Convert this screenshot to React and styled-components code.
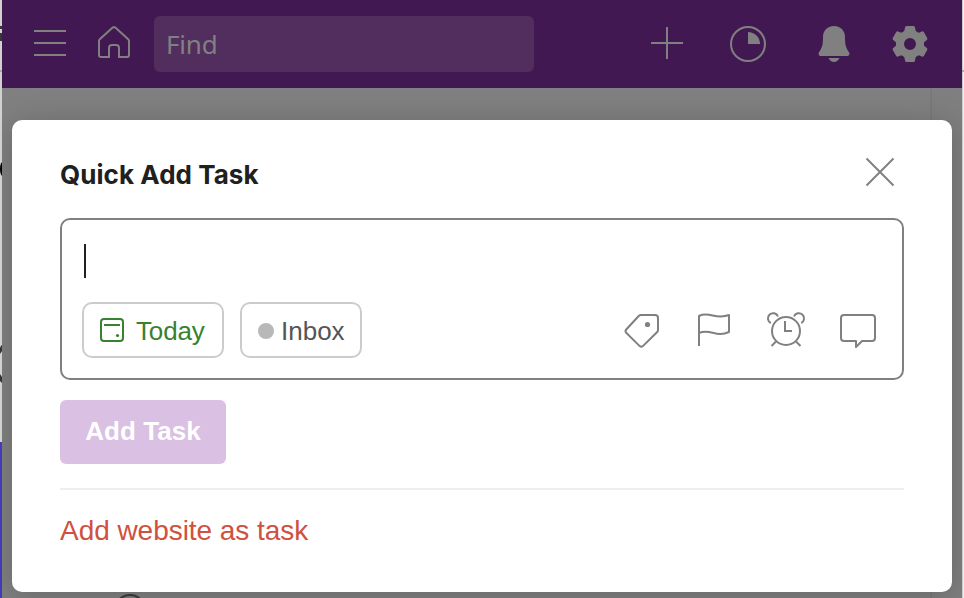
import React from "react";
import styled, { createGlobalStyle } from "styled-components";

const GlobalStyle = createGlobalStyle`
  * { box-sizing: border-box; }
  body { margin: 0; overflow: hidden; font-family: "Liberation Sans", Arial, sans-serif; }
  button { font: inherit; margin: 0; }
`;

const Screen = styled.div`
  display: grid;
  grid-template-columns: 2px 960px 2px;
  width: 964px;
  height: 598px;
  overflow: hidden;
  background: #d0d2d0;
`;

const Edge = styled.svg`
  display: block;
  width: 2px;
  height: 598px;
`;

const Popup = styled.div`
  position: relative;
  height: 598px;
  overflow: hidden;
  background: #808080;
`;

const Header = styled.header`
  display: flex;
  align-items: center;
  height: 88px;
  padding: 0 32px;
  background: #421852;
  color: #808080;
`;

const HeaderButton = styled.button`
  display: flex;
  flex: none;
  width: ${(p) => p.$width}px;
  height: 40px;
  margin-left: ${(p) => p.$gap || 0}px;
  padding: 0;
  border: 0;
  background: none;
  color: inherit;
`;

const Find = styled.div`
  display: flex;
  align-items: center;
  width: 380px;
  height: 56px;
  margin-left: 23px;
  margin-right: auto;
  padding: 0 12px;
  border-radius: 6px;
  background: #522e5e;
  font: 26px "Noto Sans", "Open Sans", sans-serif;
  letter-spacing: -0.2px;
`;

const Page = styled.div`
  display: flex;
  justify-content: flex-end;
  height: 510px;
`;

const PageMargin = styled.div`
  width: 32px;
  border-left: 2px solid #797979;
  background: #7f7f7f;
`;

const TaskCircle = styled.div`
  position: absolute;
  left: 112px;
  top: 594px;
  width: 32px;
  height: 32px;
  border: 2px solid #3c3c3c;
  border-radius: 50%;
`;

const Dialog = styled.section`
  position: absolute;
  left: 10px;
  top: 120px;
  width: 940px;
  height: 472px;
  padding: 30px 48px 0;
  border-radius: 10px;
  background: #fff;
  box-shadow: 0 4px 32px rgba(0, 0, 0, 0.2);
`;

const TitleRow = styled.div`
  display: flex;
  justify-content: space-between;
  height: 68px;
`;

const Title = styled.h1`
  margin: 9px 0 0;
  color: #202020;
  font: 700 26px/32px Inter, sans-serif;
  letter-spacing: 0.05px;
`;

const CloseButton = styled.button`
  display: flex;
  width: 48px;
  height: 44px;
  padding: 0;
  border: 0;
  background: none;
  color: #808080;
`;

const Editor = styled.div`
  display: flex;
  flex-direction: column;
  justify-content: space-between;
  height: 162px;
  padding: 24px 24px 20px 20px;
  border: 2px solid #808080;
  border-radius: 10px;
`;

const Caret = styled.div`
  width: 2px;
  height: 34px;
  margin-left: 2px;
  background: #202020;
`;

const Tools = styled.div`
  display: flex;
  align-items: center;
  height: 56px;
`;

const Chip = styled.button`
  display: flex;
  align-items: center;
  width: ${(p) => p.$width}px;
  height: 56px;
  margin-right: 16px;
  padding: 2px 0 0 16px;
  border: 2px solid #ccc;
  border-radius: 10px;
  background: #fff;
  color: ${(p) => p.$color};
  font-size: 26px;
  line-height: 30px;
  white-space: nowrap;
  letter-spacing: ${(p) => p.$tracking}px;
`;

const ChipIcon = styled.svg`
  flex: none;
  width: 24px;
  height: 24px;
  margin: -2px 12px 0 0;
`;

const Dot = styled.span`
  flex: none;
  width: 16px;
  height: 16px;
  margin-right: 7px;
  border-radius: 50%;
  background: #b8b8b8;
`;

const ToolIcons = styled.div`
  display: flex;
  gap: 32px;
  margin-left: auto;
  color: #808080;
`;

const ToolButton = styled.button`
  display: flex;
  width: 40px;
  height: 40px;
  padding: 0;
  border: 0;
  background: none;
  color: inherit;
`;

const Submit = styled.button`
  display: block;
  width: 166px;
  height: 64px;
  margin-top: 20px;
  padding: 0 0 2px;
  border: 0;
  border-radius: 6px;
  background: #dac0e3;
  color: #fff;
  font-size: 26px;
  font-weight: 700;
  letter-spacing: 0.05px;
`;

const Footer = styled.div`
  margin-top: 24px;
  padding-top: 25px;
  border-top: 2px solid #eee;
`;

const WebsiteLink = styled.a`
  display: inline-block;
  color: #cf5140;
  font-size: 28px;
  line-height: 32px;
  white-space: nowrap;
  letter-spacing: -0.04px;
`;

const Line = ({ width = 40, height = 40, children }) => (
  <svg width={width} height={height} viewBox={`0 0 ${width} ${height}`} fill="none" stroke="currentColor" strokeWidth="2">
    {children}
  </svg>
);

export default function App() {
  return (
    <>
      <GlobalStyle />
      <Screen>
        <Edge viewBox="0 0 2 598">
          <path fill="#d0d2d0" d="M0 0h2v598H0z" />
          <path fill="#343a34" d="M0 26h2v3H0zM0 33h2v8H0z" />
          <path fill="#aaa" d="M0 70h2v2H0z" />
          <path fill="#000" d="M2 162v14Q0 174 0 169t2-7z" />
          <path fill="#343434" d="M0 348q1-3 2-3v6l-2 3zM0 374l2 3v6l-2-2z" />
          <path fill="#4439b8" d="M0 442h2v156H0z" />
        </Edge>
        <Popup>
          <Header>
            <HeaderButton $width={32} aria-label="Menu">
              <Line width={32}><path d="M0 7h32M0 19h32M0 31h32" /></Line>
            </HeaderButton>
            <HeaderButton $width={34} $gap={31} aria-label="Home">
              <Line width={34}>
                <path d="M2 17Q2 16 2.8 15.2L15.4 3.8Q17 2.4 18.6 3.8L31.2 15.2Q32 16 32 17V31Q32 33 30 33H22V24Q22 21 19 21H15Q12 21 12 24V33H4Q2 33 2 31Z" />
              </Line>
            </HeaderButton>
            <Find>Find</Find>
            <HeaderButton $width={32} aria-label="Add">
              <Line width={32}><path d="M16 3v32M0 19h32" /></Line>
            </HeaderButton>
            <HeaderButton $width={40} $gap={45} aria-label="Productivity">
              <Line>
                <circle cx="20" cy="20" r="17" />
                <path fill="currentColor" stroke="none" d="M20 8a12 12 0 0 1 12 12H20z" />
              </Line>
            </HeaderButton>
            <HeaderButton $width={40} $gap={46} aria-label="Notifications">
              <Line>
                <g fill="currentColor" stroke="none">
                  <path d="M20 2C13 2 9 7 9 13C9 21 8 24 5.2 28C3.8 30 4.8 32 7 32H33C35.2 32 36.2 30 34.8 28C32 24 31 21 31 13C31 7 27 2 20 2Z" />
                  <path d="M14.5 34h11q-2 4-5.5 4t-5.5-4z" />
                </g>
              </Line>
            </HeaderButton>
            <HeaderButton $width={40} $gap={36} aria-label="Settings">
              <Line>
                <path fill="currentColor" stroke="none" fillRule="evenodd" d="M16.5 2h7q1.3 0 1.5 1.5l.6 3q.2.7.9 1.1l1.6.9q.7.3 1.3.1l2.5-1.1q1.2-.5 1.9.6l3.4 5.9q.6 1.1-.4 1.9l-2.2 1.8q-.6.5-.6 1.2v2.2q0 .7.6 1.2l2.2 1.8q1 .8.4 1.9l-3.4 5.9q-.7 1.1-1.9.6l-2.5-1.1q-.6-.2-1.3.1l-1.6.9q-.7.4-.9 1.1l-.6 3Q24.8 38 23.5 38h-7q-1.3 0-1.5-1.5l-.6-3q-.2-.7-.9-1.1l-1.6-.9q-.7-.3-1.3-.1l-2.5 1.1q-1.2.5-1.9-.6L2.8 26q-.6-1.1.4-1.9l2.2-1.8q.6-.5.6-1.2v-2.2q0-.7-.6-1.2L3.2 15.9q-1-.8-.4-1.9l3.4-5.9q.7-1.1 1.9-.6l2.5 1.1q.6.2 1.3-.1l1.6-.9q.7-.4.9-1.1l.6-3Q15.2 2 16.5 2zM20 14a6 6 0 1 0 0 12a6 6 0 0 0 0-12z" />
              </Line>
            </HeaderButton>
          </Header>
          <Page><PageMargin /></Page>
          <TaskCircle />
          <Dialog>
            <TitleRow>
              <Title>Quick Add Task</Title>
              <CloseButton aria-label="Close">
                <Line width={48} height={44}><path d="M10.500 8.500l27 27M37.500 8.500l-27 27" /></Line>
              </CloseButton>
            </TitleRow>
            <Editor>
              <Caret />
              <Tools>
                <Chip $width={142} $color="#36822f" $tracking={-0.15}>
                  <ChipIcon viewBox="0 0 24 24" fill="none" stroke="currentColor" strokeWidth="2">
                    <rect x="1" y="1" width="22" height="22" rx="3" />
                    <path d="M4 7h16" />
                    <circle cx="17.5" cy="17.5" r="1.6" fill="currentColor" stroke="none" />
                  </ChipIcon>
                  Today
                </Chip>
                <Chip $width={122} $color="#555" $tracking={0}><Dot />Inbox</Chip>
                <ToolIcons>
                  <ToolButton aria-label="Label">
                    <Line>
                      <path d="M19 5H33Q36 5 36 8V20Q36 21.200 35.200 22L20.900 36.100Q19.300 37.500 17.700 36.100L4.200 22.700Q2.800 21.200 4.200 19.500L16.700 6Q17.700 5 19 5Z" />
                      <circle cx="25.500" cy="14.500" r="2.600" fill="currentColor" stroke="none" />
                    </Line>
                  </ToolButton>
                  <ToolButton aria-label="Priority">
                    <Line>
                      <path d="M5 36V6C15 1 22 10 35 5V22C22 28 16 18 5 23" strokeLinejoin="round" />
                    </Line>
                  </ToolButton>
                  <ToolButton aria-label="Reminder">
                    <Line>
                      <circle cx="20" cy="21" r="14" />
                      <path d="M19 11v10h7M10 31.500l-4.500 4.500M30 31.500l4.500 4.500M4.800 13A5.200 5.200 0 1 1 12 6.500M35.200 13A5.200 5.200 0 1 0 28 6.500" />
                    </Line>
                  </ToolButton>
                  <ToolButton aria-label="Comment">
                    <Line>
                      <path d="M6 5H34Q37 5 37 8V28Q37 31 34 31H24L18 37V31H6Q3 31 3 28V8Q3 5 6 5Z" strokeLinejoin="round" />
                    </Line>
                  </ToolButton>
                </ToolIcons>
              </Tools>
            </Editor>
            <Submit>Add Task</Submit>
            <Footer><WebsiteLink>Add website as task</WebsiteLink></Footer>
          </Dialog>
        </Popup>
        <Edge viewBox="0 0 2 598">
          <path fill="#ccc" d="M0 0h2v598H0z" />
          <path fill="#eee" d="M1 0h1v598H1z" />
          <path fill="#aaa" d="M0 70h2v2H0z" />
        </Edge>
      </Screen>
    </>
  );
}
